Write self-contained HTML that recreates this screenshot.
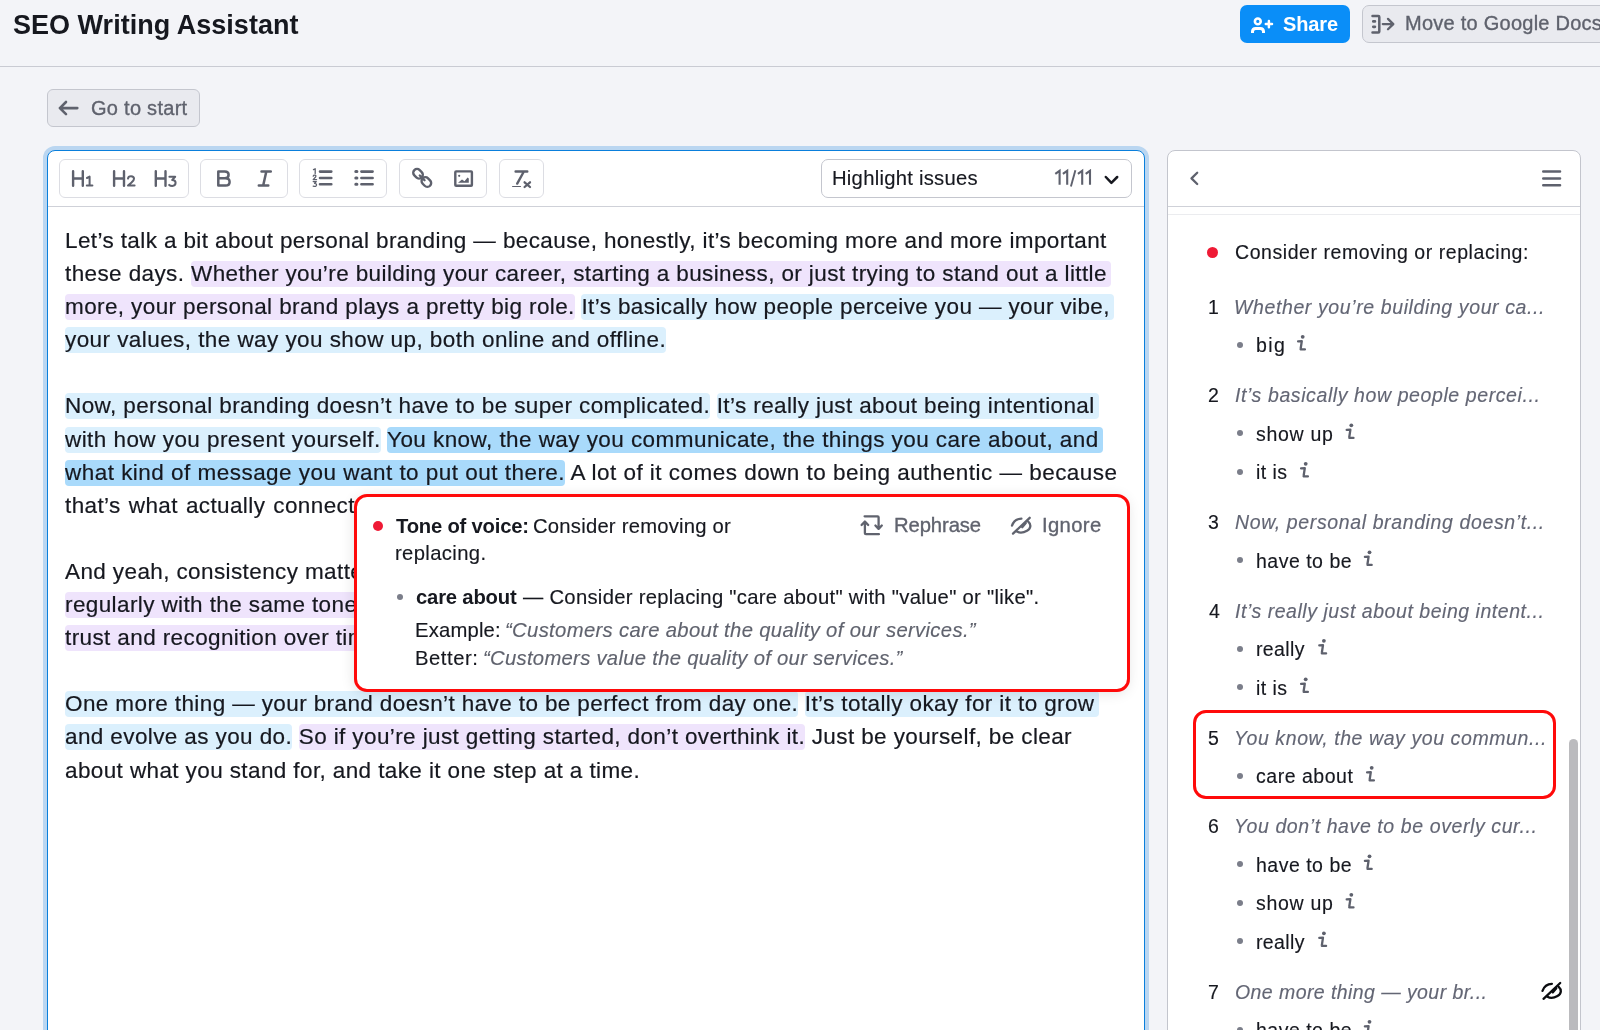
<!DOCTYPE html>
<html><head><meta charset="utf-8">
<style>
*{box-sizing:border-box;margin:0;padding:0}
html,body{width:1600px;height:1030px;overflow:hidden}
body{background:#f3f4f8;font-family:"Liberation Sans",sans-serif;color:#16181f;position:relative}
.a{position:absolute;white-space:nowrap;will-change:transform}
.txt{left:64.5px;top:223.55px;font-size:22.5px;line-height:33.1px;letter-spacing:0.39px;color:#16181f;-webkit-text-stroke:0.2px #16181f}
.ln{height:33.1px;white-space:nowrap}
.p{background:#efe4fc;border-radius:4px;padding:0 0 1px}
.b{background:#dbf0fd;border-radius:4px;padding:0 0 1px}
.d{background:#a9dafb;border-radius:4px;padding:0 0 1px}
.tr{padding-right:4.5px !important}
.grp{top:159px;height:39px;border:1px solid #dcdde3;border-radius:6px;background:#fff}
.redbox{border:3px solid #ff0a0a;border-radius:13px}
.dot6{width:6px;height:6px;border-radius:3px;background:#7b7e8a}
</style></head><body>

<div class="a" style="left:0;top:66px;width:1600px;height:1px;background:#c9cbd3"></div>
<div class="a" style="left:1240px;top:5px;width:110px;height:38px;border-radius:7px;background:#0a8ef8"></div>
<div class="a" style="left:1362px;top:5px;width:300px;height:38px;border-radius:7px;background:#e9eaef;border:1px solid #c4c6ce"></div>
<div class="a" style="left:47px;top:89px;width:153px;height:38px;border-radius:6px;background:#e9eaef;border:1px solid #c4c6ce"></div>
<div class="a" style="left:47px;top:150px;width:1098px;height:1000px;border:1px solid #0a7fdc;border-radius:8px;background:#fff;box-shadow:0 0 0 4px #bad6f1"></div>
<div class="a" style="left:48px;top:206px;width:1096px;height:1px;background:#cfd1d8"></div>
<div class="a grp" style="left:59px;width:130px"></div>
<div class="a grp" style="left:200px;width:88px"></div>
<div class="a grp" style="left:299px;width:88px"></div>
<div class="a grp" style="left:399px;width:88px"></div>
<div class="a grp" style="left:499px;width:45px"></div>
<div class="a" style="left:821px;top:159px;width:311px;height:39px;border:1px solid #c4c6ce;border-radius:7px"></div>


<div class="a txt">
  <div class="ln">Let’s talk a bit about personal branding — because, honestly, it’s becoming more and more important</div>
  <div class="ln">these days. <span class="p tr">Whether you’re building your career, starting a business, or just trying to stand out a little</span></div>
  <div class="ln"><span class="p">more, your personal brand plays a pretty big role.</span> <span class="b tr">It’s basically how people perceive you — your vibe,</span></div>
  <div class="ln" style="letter-spacing:0.43px"><span class="b">your values, the way you show up, both online and offline.</span></div>
  <div class="ln"></div>
  <div class="ln"><span class="b">Now, personal branding doesn’t have to be super complicated.</span> <span class="b tr">It’s really just about being intentional</span></div>
  <div class="ln" style="letter-spacing:0.436px"><span class="b">with how you present yourself.</span> <span class="d tr">You know, the way you communicate, the things you care about, and</span></div>
  <div class="ln" style="letter-spacing:0.474px"><span class="d">what kind of message you want to put out there.</span> A lot of it comes down to being authentic — because</div>
  <div class="ln" style="word-spacing:1.4px">that’s what actually connect with people.</div>
  <div class="ln"></div>
  <div class="ln">And yeah, consistency matters too. <span class="b">Posting</span></div>
  <div class="ln"><span class="p">regularly with the same tone and style helps build</span></div>
  <div class="ln"><span class="p">trust and recognition over time.</span></div>
  <div class="ln"></div>
  <div class="ln"><span class="b">One more thing — your brand doesn’t have to be perfect from day one.</span> <span class="b tr">It’s totally okay for it to grow</span></div>
  <div class="ln"><span class="b">and evolve as you do.</span> <span class="p">So if you’re just getting started, don’t overthink it.</span> Just be yourself, be clear</div>
  <div class="ln">about what you stand for, and take it one step at a time.</div>
</div>


<div class="a" style="left:1167px;top:150px;width:414px;height:1000px;border:1px solid #c3c5cd;border-radius:8px;background:#fff"></div>
<div class="a" style="left:1168px;top:206px;width:412px;height:1px;background:#cfd1d8"></div>
<div class="a" style="left:1168px;top:214px;width:412px;height:1px;background:#ebecef"></div>
<div class="a" style="left:1569px;top:739px;width:9px;height:300px;border-radius:4.5px;background:#bbbbbe"></div>
<div class="a" style="left:1206.8px;top:246.5px;width:11px;height:11px;border-radius:6px;background:#ef1a35"></div>
<div class="a dot6" style="left:1236.7px;top:341.5px"></div>
<div class="a dot6" style="left:1236.7px;top:430.0px"></div>
<div class="a dot6" style="left:1236.7px;top:468.5px"></div>
<div class="a dot6" style="left:1236.7px;top:557.0px"></div>
<div class="a dot6" style="left:1236.7px;top:645.5px"></div>
<div class="a dot6" style="left:1236.7px;top:684.0px"></div>
<div class="a dot6" style="left:1236.7px;top:772.5px"></div>
<div class="a dot6" style="left:1236.7px;top:861.0px"></div>
<div class="a dot6" style="left:1236.7px;top:899.5px"></div>
<div class="a dot6" style="left:1236.7px;top:938.0px"></div>
<div class="a dot6" style="left:1236.7px;top:1026.5px"></div>


<div class="a" style="left:354px;top:495px;width:774px;height:196px;background:#fff;border-radius:13px;box-shadow:0 2px 14px rgba(0,0,0,0.12)"></div>
<div class="a" style="left:373px;top:521.2px;width:10px;height:10px;border-radius:5px;background:#ef1a35"></div>
<div class="a dot6" style="left:397px;top:594px"></div>

<div class="a" style="left:12.6px;top:12.94px;font-size:27px;line-height:24px;color:#16181f;font-weight:700;letter-spacing:0.020px">SEO Writing Assistant</div>
<div class="a" style="left:1283.0px;top:12.07px;font-size:20px;line-height:24px;color:#ffffff;font-weight:700;letter-spacing:-0.125px">Share</div>
<div class="a" style="left:1404.5px;top:11.37px;font-size:20px;line-height:24px;color:#5f626d;-webkit-text-stroke:0.35px #5f626d;letter-spacing:0.250px">Move to Google Docs</div>
<div class="a" style="left:90.8px;top:96.07px;font-size:20px;line-height:24px;color:#5f626d;-webkit-text-stroke:0.35px #5f626d;letter-spacing:0.275px">Go to start</div>
<div class="a" style="left:832.2px;top:165.98px;font-size:20.25px;line-height:24px;color:#16181f;-webkit-text-stroke:0.15px #16181f;letter-spacing:0.250px">Highlight issues</div>
<div class="a" style="left:1234.6px;top:239.54px;font-size:19.5px;line-height:24px;color:#16181f;-webkit-text-stroke:0.15px #16181f;letter-spacing:0.567px">Consider removing or replacing:</div>
<div class="a" style="left:395.5px;top:514.23px;font-size:20.25px;line-height:24px;color:#16181f;font-weight:700;letter-spacing:-0.212px">Tone of voice:</div>
<div class="a" style="left:532.8px;top:514.23px;font-size:20.25px;line-height:24px;color:#16181f;-webkit-text-stroke:0.15px #16181f;letter-spacing:0.224px">Consider removing or</div>
<div class="a" style="left:394.5px;top:541.48px;font-size:20.25px;line-height:24px;color:#16181f;-webkit-text-stroke:0.15px #16181f;letter-spacing:0.361px">replacing.</div>
<div class="a" style="left:893.7px;top:513.38px;font-size:20.25px;line-height:24px;color:#60636e;-webkit-text-stroke:0.35px #60636e;letter-spacing:-0.100px">Rephrase</div>
<div class="a" style="left:1042.2px;top:513.38px;font-size:20.25px;line-height:24px;color:#60636e;-webkit-text-stroke:0.35px #60636e;letter-spacing:0.360px">Ignore</div>
<div class="a" style="left:416.0px;top:585.23px;font-size:20.25px;line-height:24px;color:#16181f;font-weight:700;letter-spacing:-0.194px">care about</div>
<div class="a" style="left:522.5px;top:585.23px;font-size:20.25px;line-height:24px;color:#16181f;-webkit-text-stroke:0.15px #16181f;letter-spacing:0.286px">— Consider replacing "care about" with "value" or "like".</div>
<div class="a" style="left:415.0px;top:618.48px;font-size:20.25px;line-height:24px;color:#16181f;-webkit-text-stroke:0.15px #16181f;letter-spacing:0.179px">Example:</div>
<div class="a" style="left:505.2px;top:618.48px;font-size:20.25px;line-height:24px;color:#60636e;-webkit-text-stroke:0.15px #60636e;font-style:italic;letter-spacing:0.341px">“Customers care about the quality of our services.”</div>
<div class="a" style="left:415.0px;top:645.98px;font-size:20.25px;line-height:24px;color:#16181f;-webkit-text-stroke:0.15px #16181f;letter-spacing:0.542px">Better:</div>
<div class="a" style="left:482.8px;top:645.98px;font-size:20.25px;line-height:24px;color:#60636e;-webkit-text-stroke:0.15px #60636e;font-style:italic;letter-spacing:0.290px">“Customers value the quality of our services.”</div>
<div class="a" style="left:1208.0px;top:294.74px;font-size:19.5px;line-height:24px;color:#16181f;-webkit-text-stroke:0.15px #16181f">1</div>
<div class="a" style="left:1234.0px;top:294.74px;font-size:19.5px;line-height:24px;color:#636674;-webkit-text-stroke:0.15px #636674;font-style:italic;letter-spacing:0.606px">Whether you’re building your ca...</div>
<div class="a" style="left:1256.3px;top:333.24px;font-size:19.5px;line-height:24px;color:#16181f;-webkit-text-stroke:0.15px #16181f;letter-spacing:1.350px">big</div>
<div class="a" style="left:1208.0px;top:383.24px;font-size:19.5px;line-height:24px;color:#16181f;-webkit-text-stroke:0.15px #16181f">2</div>
<div class="a" style="left:1235.0px;top:383.24px;font-size:19.5px;line-height:24px;color:#636674;-webkit-text-stroke:0.15px #636674;font-style:italic;letter-spacing:0.594px">It’s basically how people percei...</div>
<div class="a" style="left:1256.3px;top:421.74px;font-size:19.5px;line-height:24px;color:#16181f;-webkit-text-stroke:0.15px #16181f;letter-spacing:0.717px">show up</div>
<div class="a" style="left:1256.3px;top:460.24px;font-size:19.5px;line-height:24px;color:#16181f;-webkit-text-stroke:0.15px #16181f;letter-spacing:0.425px">it is</div>
<div class="a" style="left:1208.0px;top:510.24px;font-size:19.5px;line-height:24px;color:#16181f;-webkit-text-stroke:0.15px #16181f">3</div>
<div class="a" style="left:1235.0px;top:510.24px;font-size:19.5px;line-height:24px;color:#636674;-webkit-text-stroke:0.15px #636674;font-style:italic;letter-spacing:0.619px">Now, personal branding doesn’t...</div>
<div class="a" style="left:1256.3px;top:548.74px;font-size:19.5px;line-height:24px;color:#16181f;-webkit-text-stroke:0.15px #16181f;letter-spacing:0.500px">have to be</div>
<div class="a" style="left:1209.0px;top:598.74px;font-size:19.5px;line-height:24px;color:#16181f;-webkit-text-stroke:0.15px #16181f">4</div>
<div class="a" style="left:1235.0px;top:598.74px;font-size:19.5px;line-height:24px;color:#636674;-webkit-text-stroke:0.15px #636674;font-style:italic;letter-spacing:0.535px">It’s really just about being intent...</div>
<div class="a" style="left:1256.3px;top:637.24px;font-size:19.5px;line-height:24px;color:#16181f;-webkit-text-stroke:0.15px #16181f;letter-spacing:0.380px">really</div>
<div class="a" style="left:1256.3px;top:675.74px;font-size:19.5px;line-height:24px;color:#16181f;-webkit-text-stroke:0.15px #16181f;letter-spacing:0.425px">it is</div>
<div class="a" style="left:1208.0px;top:725.74px;font-size:19.5px;line-height:24px;color:#16181f;-webkit-text-stroke:0.15px #16181f">5</div>
<div class="a" style="left:1234.0px;top:725.74px;font-size:19.5px;line-height:24px;color:#636674;-webkit-text-stroke:0.15px #636674;font-style:italic;letter-spacing:0.583px">You know, the way you commun...</div>
<div class="a" style="left:1256.3px;top:764.24px;font-size:19.5px;line-height:24px;color:#16181f;-webkit-text-stroke:0.15px #16181f;letter-spacing:0.522px">care about</div>
<div class="a" style="left:1208.0px;top:814.24px;font-size:19.5px;line-height:24px;color:#16181f;-webkit-text-stroke:0.15px #16181f">6</div>
<div class="a" style="left:1234.0px;top:814.24px;font-size:19.5px;line-height:24px;color:#636674;-webkit-text-stroke:0.15px #636674;font-style:italic;letter-spacing:0.594px">You don’t have to be overly cur...</div>
<div class="a" style="left:1256.3px;top:852.74px;font-size:19.5px;line-height:24px;color:#16181f;-webkit-text-stroke:0.15px #16181f;letter-spacing:0.500px">have to be</div>
<div class="a" style="left:1256.3px;top:891.24px;font-size:19.5px;line-height:24px;color:#16181f;-webkit-text-stroke:0.15px #16181f;letter-spacing:0.717px">show up</div>
<div class="a" style="left:1256.3px;top:929.74px;font-size:19.5px;line-height:24px;color:#16181f;-webkit-text-stroke:0.15px #16181f;letter-spacing:0.380px">really</div>
<div class="a" style="left:1208.0px;top:979.74px;font-size:19.5px;line-height:24px;color:#16181f;-webkit-text-stroke:0.15px #16181f">7</div>
<div class="a" style="left:1235.0px;top:979.74px;font-size:19.5px;line-height:24px;color:#636674;-webkit-text-stroke:0.15px #636674;font-style:italic;letter-spacing:0.423px">One more thing — your br...</div>
<div class="a" style="left:1256.3px;top:1018.24px;font-size:19.5px;line-height:24px;color:#16181f;-webkit-text-stroke:0.15px #16181f;letter-spacing:0.500px">have to be</div>

<div class="a redbox" style="left:353.5px;top:494.3px;width:775.5px;height:198px"></div>
<div class="a redbox" style="left:1193px;top:710px;width:363px;height:89px"></div>


<svg class="a" style="left:0;top:0" width="1600" height="1030" viewBox="0 0 1600 1030" fill="none" stroke-linecap="round" stroke-linejoin="round">
<!-- share -->
<g stroke="#fff" stroke-width="2.6"><circle cx="1257.8" cy="21.4" r="2.9"/>
<path d="M1252.5 32.9V31.6Q1252.5 28.4 1255.7 28.4H1260.3Q1263.5 28.4 1263.5 31.6V32.9" stroke-width="3" stroke-linecap="butt"/>
<path d="M1268.9 21V27.2M1265.8 24.1H1272" stroke-width="2.5"/></g>
<!-- move -->
<g stroke="#5f626d" stroke-width="2.5"><path d="M1372.5 16H1378.3Q1379.3 16 1379.3 17V31.4Q1379.3 32.4 1378.3 32.4H1372.5"/>
<path d="M1373.3 21.4H1374.9M1373.3 26.8H1374.9" stroke-width="2.7"/>
<path d="M1382.8 24.1H1393.2M1388 18.9L1393.3 24.1L1388 29.3" stroke-width="2.3"/></g>
<!-- go to start -->
<path d="M59.9 108.1H77.3M66 102L59.9 108.1L66 114.2" stroke="#5f626d" stroke-width="2.6"/>
<!-- toolbar -->
<g stroke="#5e616d" stroke-width="2.4">
<path d="M73.1 171.3V185.8M82.8 171.3V185.8M73.1 178.5H82.8"/>
<path d="M87 178L89.6 176.6V185.6M86.8 185.6H92.4" stroke-width="2"/>
<path d="M114.1 171.3V185.8M124 171.3V185.8M114.1 178.5H124"/>
<path d="M128 178.6Q128.3 176.3 131 176.3Q134 176.3 134 178.8Q134 180.6 131.6 182.4L128 185.6H134.6" stroke-width="2"/>
<path d="M155.8 171.3V185.8M165.5 171.3V185.8M155.8 178.5H165.5"/>
<path d="M169.4 176.7H175.2L172.2 179.9Q175.6 180.1 175.6 182.8Q175.6 185.9 172.3 185.9Q170.3 185.9 169.2 184.9" stroke-width="2"/>
<path d="M218.3 171.5H224.8Q228.6 171.5 228.6 174.8Q228.6 178.3 224.8 178.3H218.3V171.5V185.5H225.5Q229.6 185.5 229.6 181.9Q229.6 178.3 225.3 178.3" stroke-width="2.5"/>
<path d="M261.5 171.6H270.8M258.8 185.4H268.3M266.2 172L263.3 185" stroke-width="2.5"/>
<path d="M313.5 169.6L315.2 168.8V173.6" stroke-width="1.3"/>
<path d="M313.2 176.2Q313.6 175 315 175.2Q316.4 175.5 315.6 177L313.2 179.6H316.6" stroke-width="1.3"/>
<path d="M313.2 181.6H316.3L314.6 183.3Q316.7 183.5 316.5 185.2Q316.2 186.9 313.2 186.2" stroke-width="1.3"/>
<path d="M320 171.6H331.3M320 178H331.3M320 184.3H331.3" stroke-width="2.6"/>
<path d="M355.8 171.6H356.9M355.8 178H356.9M355.8 184.3H356.9" stroke-width="3"/>
<path d="M361.4 171.6H372.6M361.4 178H372.6M361.4 184.3H372.6" stroke-width="2.6"/>
<!-- link -->
<g transform="rotate(-45 422.2 177.9)" stroke-width="2.4"><rect x="418.4" y="166.8" width="7.6" height="10.4" rx="3.8"/><rect x="418.4" y="178.6" width="7.6" height="10.4" rx="3.8"/><path d="M422.2 174.5V181.2"/></g>
<!-- image -->
<rect x="455.3" y="171.4" width="16.6" height="14.3" rx="0.8" stroke-width="2.4"/>
<circle cx="459.2" cy="175.8" r="1.1" fill="#5e616d" stroke="none"/>
<path d="M458 182.8L462 179.5L464.5 181.3L467.6 177.4L468.8 178.6V182.8Z" fill="#5e616d" stroke="none"/>
<!-- Tx -->
<path d="M515.6 171.5H527.3M523.6 172L517.2 183.6" stroke-width="2.4"/>
<path d="M512.6 186.5H520.5" stroke-width="1.2"/>
<path d="M524.6 182.3L530 187M530 182.3L524.6 187" stroke-width="2.3"/>
</g>
<!-- 11/11 -->
<g stroke="#5e616d" stroke-width="2.1" stroke-linecap="butt" stroke-linejoin="miter">
<path d="M1055.3 173.9L1059.6 170.8V184.7M1062.9 173.9L1067.2 170.8V184.7M1077.9 173.9L1082.2 170.8V184.7M1085.7 173.9L1090 170.8V184.7"/>
<path d="M1075.4 170.2L1070.9 186.6" stroke-width="1.9"/>
</g>
<!-- chevron dropdown -->
<path d="M1105.8 177L1111.4 182.8L1117.2 177" stroke="#16181f" stroke-width="2.5"/>
<!-- panel header -->
<path d="M1197.2 172.8L1191.5 178.4L1197.2 184" stroke="#5e616d" stroke-width="2.3"/>
<path d="M1543.3 171.5H1560M1543.3 178.5H1560M1543.3 185.3H1560" stroke="#5e616d" stroke-width="2.6"/>
<!-- rephrase -->
<g stroke="#60636e" stroke-width="2.3">
<path d="M864.6 516.3H877.6Q878.6 516.3 878.6 517.3V528.6M875.4 525.5L878.6 528.9L881.8 525.5"/>
<path d="M878.9 534.2H865.9Q864.9 534.2 864.9 533.2V521.8M861.6 525L864.9 521.5L868.2 525"/>
</g>
<g transform="translate(0,0)" stroke="#60636e" stroke-width="2.3"><path d="M1012 525.6C1013.6 521 1017 518.8 1021.4 518.6"/><path d="M1013 533.6L1029.7 517.8"/><path d="M1028 521.4C1031.5 524.5 1031 528.5 1027 530.8C1023.5 532.8 1019.5 533 1017 531.6"/><path d="M1022.2 527.2L1025.8 523"/></g>
<g transform="translate(530.5,465.2)" stroke="#0b0c10" stroke-width="2.3"><path d="M1012 525.6C1013.6 521 1017 518.8 1021.4 518.6"/><path d="M1013 533.6L1029.7 517.8"/><path d="M1028 521.4C1031.5 524.5 1031 528.5 1027 530.8C1023.5 532.8 1019.5 533 1017 531.6"/><path d="M1022.2 527.2L1025.8 523"/></g>
<circle cx="1302.7" cy="336.8" r="1.9" fill="#5e616d"/><path d="M1298.1 341.4L1301.8 341.2L1300.6 349.0Q1300.5 349.4 1301.1 349.4H1304.9" stroke="#5e616d" stroke-width="2.3"/><circle cx="1351.3" cy="425.3" r="1.9" fill="#5e616d"/><path d="M1346.7 429.9L1350.4 429.7L1349.2 437.5Q1349.1 437.9 1349.7 437.9H1353.5" stroke="#5e616d" stroke-width="2.3"/><circle cx="1305.7" cy="463.8" r="1.9" fill="#5e616d"/><path d="M1301.1 468.4L1304.8 468.2L1303.6 476.0Q1303.5 476.4 1304.1 476.4H1307.9" stroke="#5e616d" stroke-width="2.3"/><circle cx="1369.5" cy="552.3" r="1.9" fill="#5e616d"/><path d="M1364.9 556.9L1368.6 556.7L1367.4 564.5Q1367.3 564.9 1367.9 564.9H1371.7" stroke="#5e616d" stroke-width="2.3"/><circle cx="1323.9" cy="640.8" r="1.9" fill="#5e616d"/><path d="M1319.3 645.4L1323.0 645.2L1321.8 653.0Q1321.7 653.4 1322.3 653.4H1326.1" stroke="#5e616d" stroke-width="2.3"/><circle cx="1305.7" cy="679.3" r="1.9" fill="#5e616d"/><path d="M1301.1 683.9L1304.8 683.7L1303.6 691.5Q1303.5 691.9 1304.1 691.9H1307.9" stroke="#5e616d" stroke-width="2.3"/><circle cx="1371.7" cy="767.8" r="1.9" fill="#5e616d"/><path d="M1367.1 772.4L1370.8 772.2L1369.6 780.0Q1369.5 780.4 1370.1 780.4H1373.9" stroke="#5e616d" stroke-width="2.3"/><circle cx="1369.5" cy="856.3" r="1.9" fill="#5e616d"/><path d="M1364.9 860.9L1368.6 860.7L1367.4 868.5Q1367.3 868.9 1367.9 868.9H1371.7" stroke="#5e616d" stroke-width="2.3"/><circle cx="1351.3" cy="894.8" r="1.9" fill="#5e616d"/><path d="M1346.7 899.4L1350.4 899.2L1349.2 907.0Q1349.1 907.4 1349.7 907.4H1353.5" stroke="#5e616d" stroke-width="2.3"/><circle cx="1323.9" cy="933.3" r="1.9" fill="#5e616d"/><path d="M1319.3 937.9L1323.0 937.7L1321.8 945.5Q1321.7 945.9 1322.3 945.9H1326.1" stroke="#5e616d" stroke-width="2.3"/><circle cx="1369.5" cy="1021.8" r="1.9" fill="#5e616d"/><path d="M1364.9 1026.4L1368.6 1026.2L1367.4 1034.0Q1367.3 1034.4 1367.9 1034.4H1371.7" stroke="#5e616d" stroke-width="2.3"/>
</svg>

</body></html>
